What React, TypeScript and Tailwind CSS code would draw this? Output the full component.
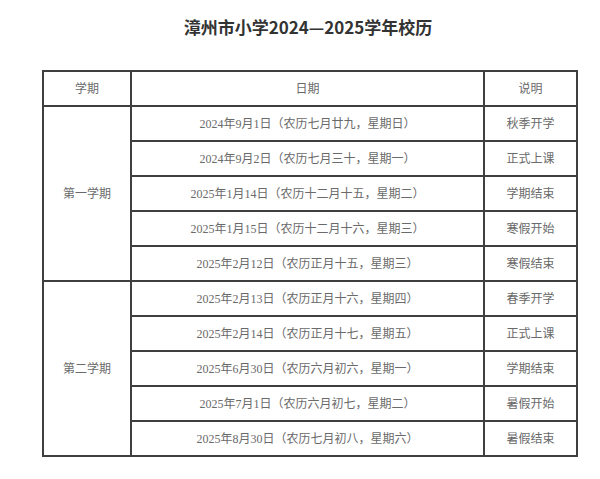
import React from "react";

const rows1 = [
  ["2024年9月1日（农历七月廿九，星期日）", "秋季开学"],
  ["2024年9月2日（农历七月三十，星期一）", "正式上课"],
  ["2025年1月14日（农历十二月十五，星期二）", "学期结束"],
  ["2025年1月15日（农历十二月十六，星期三）", "寒假开始"],
  ["2025年2月12日（农历正月十五，星期三）", "寒假结束"],
];
const rows2 = [
  ["2025年2月13日（农历正月十六，星期四）", "春季开学"],
  ["2025年2月14日（农历正月十七，星期五）", "正式上课"],
  ["2025年6月30日（农历六月初六，星期一）", "学期结束"],
  ["2025年7月1日（农历六月初七，星期二）", "暑假开始"],
  ["2025年8月30日（农历七月初八，星期六）", "暑假结束"],
];

const cell = "border-2 border-[#3f3f3f] text-center align-middle p-0";

function Group({ name, rows }: { name: string; rows: string[][] }) {
  return (
    <>
      {rows.map((r, i) => (
        <tr key={i} className="h-[35px]">
          {i === 0 && (
            <td rowSpan={rows.length} className={cell}>
              {name}
            </td>
          )}
          <td className={cell}>{r[0]}</td>
          <td className={cell}>{r[1]}</td>
        </tr>
      ))}
    </>
  );
}

export default function App() {
  return (
    <div className="w-[600px] h-[479px] bg-white overflow-hidden">
      <h1
        className="pt-[17px] h-[70px] pl-[16px] text-center text-[17px] font-bold text-[#333] leading-[20px]"
        style={{ fontFamily: '"Noto Sans CJK SC", "Noto Sans", sans-serif' }}
      >
        漳州市小学2024—2025学年校历
      </h1>
      <table
        className="ml-[42px] w-[534px] border-collapse text-[12px] text-[#6a6a6a] table-fixed"
        style={{ fontFamily: '"Liberation Serif", "Noto Sans CJK SC", serif' }}
      >
        <colgroup>
          <col className="w-[88px]" />
          <col className="w-[353px]" />
          <col className="w-[93px]" />
        </colgroup>
        <tbody>
          <tr className="h-[35px]">
            <td className={cell}>学期</td>
            <td className={cell}>日期</td>
            <td className={cell}>说明</td>
          </tr>
          <Group name="第一学期" rows={rows1} />
          <Group name="第二学期" rows={rows2} />
        </tbody>
      </table>
    </div>
  );
}
